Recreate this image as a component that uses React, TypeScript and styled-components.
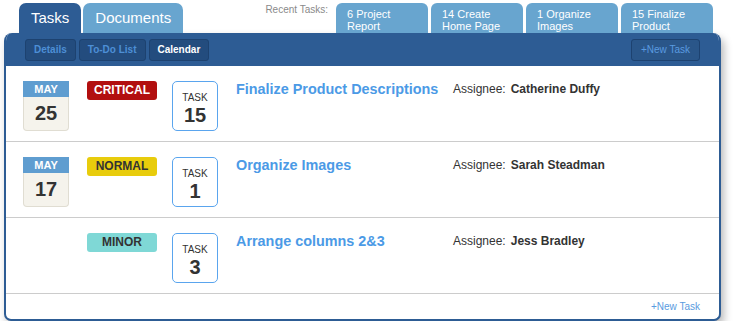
import React from 'react';
import styled, { createGlobalStyle } from 'styled-components';

const GlobalStyle = createGlobalStyle`
  body {
    margin: 0;
    background: #ffffff;
    font-family: "Liberation Sans", Arial, sans-serif;
  }
`;

const Page = styled.div`
  width: 717px;
  padding: 3px 0 0 4px;
`;

const TopBar = styled.div`
  display: flex;
  align-items: flex-start;
  height: 30px;
  padding-left: 15px;
`;

const MainTab = styled.div<{ $active?: boolean }>`
  height: 30px;
  box-sizing: border-box;
  padding: 6px 12px 0;
  margin-right: 2px;
  border-radius: 7px 7px 0 0;
  background: ${p => (p.$active ? '#2d5c94' : '#68a5cf')};
  color: #ffffff;
  font-size: 15px;
  line-height: 18px;
`;

const Recent = styled.div`
  display: flex;
  align-items: flex-start;
  margin-left: auto;
  margin-right: 8px;
`;

const RecentLabel = styled.span`
  font-size: 10px;
  line-height: 12px;
  color: #8a8a8a;
  margin: 1px 5px 0 0;
`;

const RecentTab = styled.div`
  width: 92px;
  height: 30px;
  box-sizing: border-box;
  overflow: hidden;
  padding: 5px 0 0 11px;
  margin-left: 3px;
  border-radius: 6px 6px 0 0;
  background: #68a5cf;
  color: #ffffff;
  font-size: 11px;
  line-height: 12px;
`;

const Panel = styled.div`
  border: 2px solid #2d5c94;
  border-top: none;
  border-radius: 8px 8px 7px 7px;
  background: #ffffff;
  box-shadow: 3px 5px 8px rgba(0, 0, 0, 0.28);
  overflow: hidden;
`;

const Header = styled.div`
  display: flex;
  align-items: center;
  height: 33px;
  padding: 0 19px;
  background: #2d5c94;
`;

const SubTab = styled.button<{ $active?: boolean }>`
  height: 22px;
  padding: 0 8px;
  margin-right: 3px;
  border: 1px solid #1d4270;
  border-radius: 3px;
  background: #234c7e;
  color: ${p => (p.$active ? '#ffffff' : '#4d8fd6')};
  font-family: "Liberation Sans", Arial, sans-serif;
  font-size: 10px;
  font-weight: bold;
`;

const NewTaskButton = styled.button`
  margin-left: auto;
  height: 22px;
  padding: 0 9px;
  border: 1px solid #1d4270;
  border-radius: 3px;
  background: #2a5689;
  color: #5a9be0;
  font-family: "Liberation Sans", Arial, sans-serif;
  font-size: 10px;
  white-space: nowrap;
`;

const Row = styled.div`
  display: flex;
  align-items: flex-start;
  height: 76px;
  box-sizing: border-box;
  padding: 15px 0 0 17px;
  border-bottom: 1px solid #cccccc;
`;

const DateBlock = styled.div`
  width: 46px;
  height: 50px;
  flex-shrink: 0;
  margin-right: 18px;
  display: flex;
  flex-direction: column;
`;

const DateMonth = styled.div`
  height: 16px;
  background: #5f9dd0;
  color: #ffffff;
  font-size: 11px;
  font-weight: bold;
  line-height: 16px;
  text-align: center;
`;

const DateDay = styled.div`
  flex: 1;
  background: #f5f3ec;
  border: 1px solid #e0ddd2;
  border-top: none;
  border-radius: 0 0 4px 4px;
  color: #333333;
  font-size: 20px;
  font-weight: bold;
  line-height: 32px;
  text-align: center;
`;

const badgeColours = {
  critical: { bg: '#b20f0f', fg: '#ffffff' },
  normal: { bg: '#e8cc0c', fg: '#333333' },
  minor: { bg: '#7fd8d6', fg: '#333333' },
};

type Level = keyof typeof badgeColours;

const Badge = styled.div<{ $level: Level }>`
  width: 70px;
  height: 19px;
  flex-shrink: 0;
  margin-right: 15px;
  border-radius: 3px;
  background: ${p => badgeColours[p.$level].bg};
  color: ${p => badgeColours[p.$level].fg};
  font-size: 12px;
  font-weight: bold;
  line-height: 19px;
  text-align: center;
  text-transform: uppercase;
`;

const TaskBox = styled.div`
  width: 46px;
  height: 50px;
  box-sizing: border-box;
  flex-shrink: 0;
  margin-right: 18px;
  border: 1px solid #5aa5ee;
  border-radius: 5px;
  color: #333333;
  text-align: center;
`;

const TaskLabel = styled.div`
  margin-top: 10px;
  font-size: 10px;
  line-height: 12px;
`;

const TaskNumber = styled.div`
  font-size: 20px;
  font-weight: bold;
  line-height: 22px;
`;

const Title = styled.div`
  width: 217px;
  flex-shrink: 0;
  margin-top: -1px;
  color: #4b9ae6;
  font-size: 14.4px;
  font-weight: bold;
  line-height: 18px;
  white-space: nowrap;
`;

const Assignee = styled.div`
  margin-top: 1px;
  color: #333333;
  font-size: 12px;
  line-height: 15px;

  b {
    margin-left: 5px;
  }
`;

const Footer = styled.div`
  display: flex;
  justify-content: flex-end;
  align-items: center;
  height: 25px;
  padding-right: 19px;
  color: #5a9be0;
  font-size: 10px;
`;

interface Task {
  month?: string;
  day?: string;
  level: Level;
  number: number;
  title: string;
  assignee: string;
}

const tasks: Task[] = [
  { month: 'May', day: '25', level: 'critical', number: 15, title: 'Finalize Product Descriptions', assignee: 'Catherine Duffy' },
  { month: 'May', day: '17', level: 'normal', number: 1, title: 'Organize Images', assignee: 'Sarah Steadman' },
  { level: 'minor', number: 3, title: 'Arrange columns 2&3', assignee: 'Jess Bradley' },
];

// only the first two lines fit under the tab top
const recent = [
  ['6 Project', 'Report'],
  ['14 Create', 'Home Page'],
  ['1 Organize', 'Images'],
  ['15 Finalize', 'Product'],
];

const App: React.FC = () => (
  <Page>
    <GlobalStyle />
    <TopBar>
      <MainTab $active>Tasks</MainTab>
      <MainTab>Documents</MainTab>
      <Recent>
        <RecentLabel>Recent Tasks:</RecentLabel>
        {recent.map(lines => (
          <RecentTab key={lines[0]}>
            {lines.map(l => (
              <div key={l}>{l}</div>
            ))}
          </RecentTab>
        ))}
      </Recent>
    </TopBar>
    <Panel>
      <Header>
        <SubTab>Details</SubTab>
        <SubTab>To-Do List</SubTab>
        <SubTab $active>Calendar</SubTab>
        <NewTaskButton>+New Task</NewTaskButton>
      </Header>
      {tasks.map(t => (
        <Row key={t.number}>
          {t.day ? (
            <DateBlock>
              <DateMonth>{t.month?.toUpperCase()}</DateMonth>
              <DateDay>{t.day}</DateDay>
            </DateBlock>
          ) : (
            <DateBlock />
          )}
          <Badge $level={t.level}>{t.level}</Badge>
          <TaskBox>
            <TaskLabel>TASK</TaskLabel>
            <TaskNumber>{t.number}</TaskNumber>
          </TaskBox>
          <Title>{t.title}</Title>
          <Assignee>
            Assignee:<b>{t.assignee}</b>
          </Assignee>
        </Row>
      ))}
      <Footer>+New Task</Footer>
    </Panel>
  </Page>
);

export default App;
